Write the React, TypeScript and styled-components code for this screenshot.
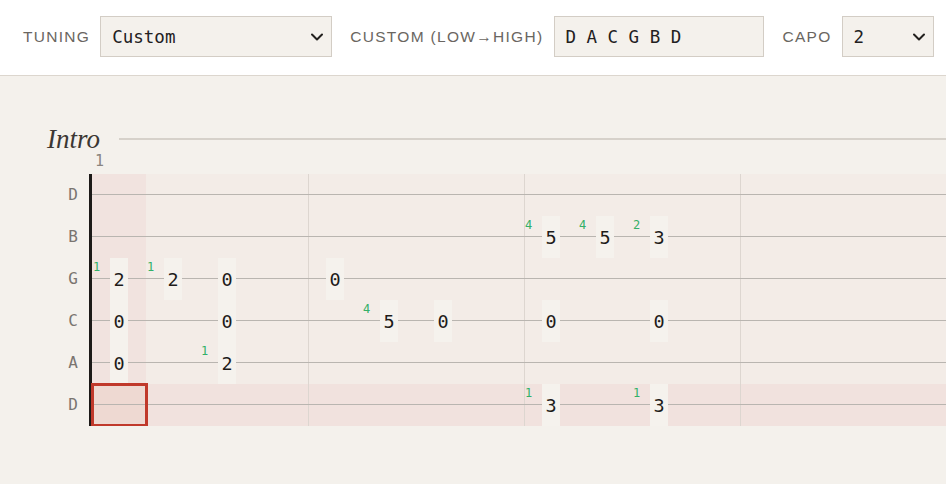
import React from "react";
import styled, { createGlobalStyle } from "styled-components";

const MONO = `"DejaVu Sans Mono", "Liberation Mono", monospace`;

const GlobalStyle = createGlobalStyle`
	html, body {
		margin: 0;
		padding: 0;
		background: #f4f1ec;
		overflow: hidden;
	}
	body {
		font-family: "Liberation Sans", Arial, sans-serif;
	}
`;

const Header = styled.header`
	display: flex;
	align-items: center;
	height: 76px;
	box-sizing: border-box;
	padding: 0 23px 2px;
	background: #fff;
	border-bottom: 1px solid #dcd6ce;
`;

const Field = styled.div<{ $gap?: number }>`
	display: flex;
	align-items: center;
	flex-shrink: 0;
	gap: ${(p) => p.$gap ?? 10}px;
	margin-right: 18px;
`;

const Label = styled.span`
	white-space: nowrap;
	font-size: 15.5px;
	letter-spacing: 1.3px;
	color: #6a6661;
	text-transform: uppercase;
`;

const Select = styled.div<{ $width: number }>`
	display: flex;
	align-items: center;
	justify-content: space-between;
	box-sizing: border-box;
	width: ${(p) => p.$width}px;
	height: 41px;
	padding: 0 8px 0 11px;
	border: 1px solid #d3cdc5;
	background: #f4f1ec;
	font-family: ${MONO};
	font-size: 17.5px;
	color: #22201e;
`;

const TextInput = styled.input`
	box-sizing: border-box;
	width: 210px;
	height: 41px;
	padding: 0 10px;
	border: 1px solid #d3cdc5;
	background: #f4f1ec;
	font-family: ${MONO};
	font-size: 17.5px;
	color: #22201e;
	outline: none;
`;

const Main = styled.main`
	padding: 48px 0 0 47px;
`;

const SectionHead = styled.div`
	display: flex;
	align-items: center;
	gap: 19px;
	height: 30px;
	margin-bottom: 1px;
`;

const SectionTitle = styled.h2`
	margin: 0;
	font: italic 400 27px/30px "Liberation Serif", "Times New Roman", serif;
	color: #3b3733;
`;

const Rule = styled.div`
	flex: 1;
	height: 2px;
	background: #d6d1ca;
`;

const NumberRow = styled.div`
	display: flex;
	height: 19px;
	padding-left: 45px;
`;

const MeasureNumber = styled.div`
	width: 216px;
	flex-shrink: 0;
	box-sizing: border-box;
	padding-left: 3px;
	font-family: ${MONO};
	font-size: 15px;
	line-height: 12px;
	color: #8a8580;
`;

const StaffRow = styled.div`
	display: flex;
`;

const StringLabels = styled.div`
	width: 42px;
	flex-shrink: 0;
`;

const StringLabel = styled.div`
	height: 42px;
	line-height: 42px;
	padding-right: 11px;
	text-align: right;
	font-family: ${MONO};
	font-size: 16px;
	color: #7a7570;
`;

const Staff = styled.div`
	display: flex;
	height: 252px;
	border-left: 3px solid #1c1a18;
	background: linear-gradient(to bottom, #f3ece7 0, #f3ece7 210px, #f1e2de 210px);
`;

const Measure = styled.div`
	display: flex;
	flex-shrink: 0;
`;

const Column = styled.div<{ $hl?: boolean; $bar?: boolean }>`
	width: 54px;
	flex-shrink: 0;
	background: ${(p) => (p.$hl ? "#f1e3df" : "transparent")};
	box-shadow: ${(p) => (p.$bar ? "inset 1px 0 0 #ddd6d0" : "none")};
`;

const Cell = styled.div<{ $sel?: boolean }>`
	position: relative;
	display: flex;
	justify-content: center;
	height: 42px;
	background: ${(p) => (p.$sel ? "#eed9d2" : "transparent")};

	&::before {
		content: "";
		position: absolute;
		left: 0;
		right: 0;
		top: 20px;
		height: 1px;
		background: #b9b5b0;
	}

	${(p) =>
		p.$sel &&
		`
		&::after {
			content: "";
			position: absolute;
			top: -1px;
			left: -1px;
			right: -2px;
			bottom: -1px;
			border: 3px solid #c0392b;
			z-index: 3;
		}
	`}
`;

const NoteBox = styled.div`
	position: relative;
	z-index: 1;
	display: flex;
	align-items: center;
	justify-content: center;
	box-sizing: border-box;
	width: 18px;
	height: 100%;
	padding-top: 1px;
	background: #f5f2ed;
	font-family: ${MONO};
	font-size: 18.5px;
	color: #1e1c1a;
`;

const Finger = styled.span`
	position: absolute;
	left: 1px;
	top: 3px;
	z-index: 2;
	font-family: ${MONO};
	font-size: 12px;
	line-height: 12px;
	color: #33b068;
`;

const Chevron = () => (
	<svg width="12" height="8" viewBox="0 0 12 8" fill="none">
		<path d="M1 1.5 L6 6.5 L11 1.5" stroke="#22201e" strokeWidth="2" strokeLinecap="round" strokeLinejoin="round" />
	</svg>
);

type Note = { fret: number; finger?: number } | null;

const strings = ["D", "B", "G", "C", "A", "D"];
const empty: Note[] = [null, null, null, null, null, null];

// rows top→bottom: D B G C A D
const measures: Note[][][] = [
	[
		[null, null, { fret: 2, finger: 1 }, { fret: 0 }, { fret: 0 }, null],
		[null, null, { fret: 2, finger: 1 }, null, null, null],
		[null, null, { fret: 0 }, { fret: 0 }, { fret: 2, finger: 1 }, null],
		empty,
	],
	[
		[null, null, { fret: 0 }, null, null, null],
		[null, null, null, { fret: 5, finger: 4 }, null, null],
		[null, null, null, { fret: 0 }, null, null],
		empty,
	],
	[
		[null, { fret: 5, finger: 4 }, null, { fret: 0 }, null, { fret: 3, finger: 1 }],
		[null, { fret: 5, finger: 4 }, null, null, null, null],
		[null, { fret: 3, finger: 2 }, null, { fret: 0 }, null, { fret: 3, finger: 1 }],
		empty,
	],
	[empty, empty, empty, empty],
];

export default function App() {
	return (
		<>
			<GlobalStyle />
			<Header>
				<Field>
					<Label>Tuning</Label>
					<Select $width={232}>
						Custom
						<Chevron />
					</Select>
				</Field>
				<Field $gap={11}>
					<Label>Custom (low→high)</Label>
					<TextInput readOnly value="D A C G B D" />
				</Field>
				<Field>
					<Label>Capo</Label>
					<Select $width={92}>
						2
						<Chevron />
					</Select>
				</Field>
			</Header>
			<Main>
				<SectionHead>
					<SectionTitle>Intro</SectionTitle>
					<Rule />
				</SectionHead>
				<NumberRow>
					{measures.map((_, i) => (
						<MeasureNumber key={i}>{i === 0 ? "1" : ""}</MeasureNumber>
					))}
				</NumberRow>
				<StaffRow>
					<StringLabels>
						{strings.map((s, i) => (
							<StringLabel key={i}>{s}</StringLabel>
						))}
					</StringLabels>
					<Staff>
						{measures.map((cols, m) => (
							<Measure key={m}>
								{cols.map((col, c) => (
									<Column key={c} $hl={m === 0 && c === 0} $bar={m > 0 && c === 0}>
										{col.map((note, r) => (
											<Cell key={r} $sel={m === 0 && c === 0 && r === 5}>
												{note && (
													<>
														{note.finger !== undefined && <Finger>{note.finger}</Finger>}
														<NoteBox>{note.fret}</NoteBox>
													</>
												)}
											</Cell>
										))}
									</Column>
								))}
							</Measure>
						))}
					</Staff>
				</StaffRow>
			</Main>
		</>
	);
}
